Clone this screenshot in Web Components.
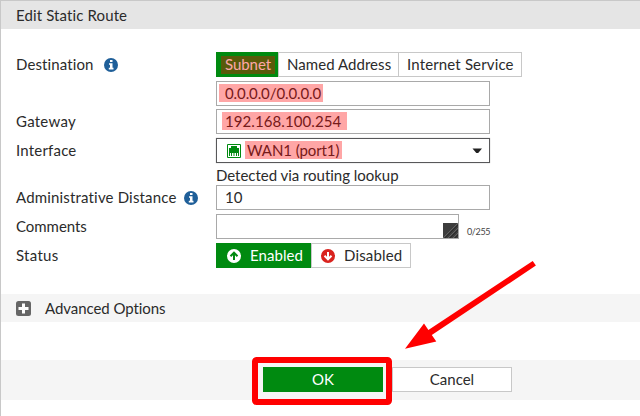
<!DOCTYPE html>
<html lang="en">
<head>
<meta charset="utf-8">
<title>Edit Static Route</title>
<style>
  html, body { margin: 0; height: 100%; background: #fff; overflow: hidden; }
  body { font: 15px/25px Lato, "Liberation Sans", sans-serif; color: #2b2b2b; }
</style>
</head>
<body>
<route-page></route-page>
<script>
const define = (name, html) => {
  const template = document.createElement('template');
  template.innerHTML = html;
  customElements.define(name, class extends HTMLElement {
    constructor() {
      super();
      this.attachShadow({ mode: 'open' }).append(template.content.cloneNode(true));
    }
  });
};

define('info-icon', `
<style>:host{display:inline-flex;width:14px;height:14px} svg{display:block}</style>
<svg width="14" height="14" viewBox="0 0 14 14"><circle cx="7" cy="7" r="7" fill="#1f5f99"/><path fill="#fff" d="M6 2h2.5v2H6zM5 5.2h3.5v4.6h1V11.6H4.8V9.8H6V6.8H5z"/></svg>`);

define('text-mark', `
<style>:host{position:relative;display:inline-block}
i{position:absolute;left:var(--l,-4px);width:var(--w,60px);top:var(--t,3px);height:18px;background:rgba(255,0,0,.35)}</style>
<slot></slot><i></i>`);

define('form-row', `
<style>:host{display:flex;height:25px;margin-bottom:var(--gap,4px)}
.label{width:200px;display:flex;align-items:center;flex:none;gap:7px;white-space:nowrap}
.control{display:flex;flex:none}</style>
<div class="label"><slot name="label"></slot></div><div class="control"><slot></slot></div>`);

define('field-box', `
<style>:host{box-sizing:border-box;display:flex;align-items:center;width:274px;height:25px;border:1px solid #a9a9a9;background:#fff;padding:0 8px;white-space:nowrap}
:host([select]){border-color:#58585a;padding:0 7px 0 10px;box-shadow:0 0 1px #aaa}</style>
<slot></slot>`);

define('toggle-option', `
<style>:host{box-sizing:border-box;display:flex;align-items:center;height:25px;border:1px solid #c8c8c8;background:#fff;white-space:nowrap;padding:0 0 0 8px}
:host([active]){background:#008a10;border-color:#008a10;color:#fff}
:host([joined]){border-left:0}
::slotted(svg){margin-right:9px;flex:none}</style>
<slot></slot>`);

define('push-button', `
<style>:host{box-sizing:border-box;width:120px;height:25px;border:1px solid #c8c8c8;background:#fff;display:flex;align-items:center;justify-content:center}
:host([primary]){background:#008a10;border-color:#008a10;color:#fff}</style>
<slot></slot>`);

define('size-grip', `
<style>:host{display:block;width:15px;height:15px} svg{display:block}</style>
<svg width="15" height="15"><rect width="15" height="15" fill="#3d3d3d"/><path d="M0 15 15 0M5 15 15 5M10 15 15 10" stroke="#626262" stroke-width="1"/><path d="M2 15 15 2M7 15 15 7M12 15l3-3" stroke="#2a2a2a" stroke-width="1"/></svg>`);

define('panel-header', `
<style>:host{box-sizing:border-box;display:flex;align-items:center;height:28px;padding:1px 15px 0;background:#e5e5e5;letter-spacing:.12px}</style>
<slot></slot>`);

define('advanced-bar', `
<style>:host{display:flex;align-items:center;height:28px;background:#f5f5f5;padding-left:15px;margin-top:26px;letter-spacing:-.06px}
svg{margin-right:14px}</style>
<svg width="15" height="15"><rect width="15" height="15" rx="2.5" fill="#666"/><path d="M6 2.5h3V6h3.5v3H9v3.5H6V9H2.5V6H6z" fill="#fff"/></svg><slot></slot>`);

define('action-bar', `
<style>:host{box-sizing:border-box;display:flex;gap:9px;height:40px;margin-top:38px;padding:7px 0 0 262px;background:#f5f5f5}</style>
<slot></slot>`);

define('callout-overlay', `
<style>:host{position:absolute;left:-1px;top:-1px;width:640px;height:416px;pointer-events:none} svg{display:block}</style>
<svg width="640" height="416"><rect x="255" y="360" width="134" height="42" rx="1.5" fill="none" stroke="#f00" stroke-width="6"/><path d="M532.7 261 535.9 265.5 431.8 335 436.3 341.5 405 348.8 424 323.4 428.4 330z" fill="#f00"/></svg>`);

define('route-page', `
<style>
:host{box-sizing:border-box;display:block;position:relative;width:640px;height:416px;border:1px solid #c8c8c8;border-right:0;border-bottom:0}
.form{padding:23px 0 0 15px}
.note{height:22px;margin-left:200px;line-height:25px;letter-spacing:-.03px}
.arrow{margin-left:auto}
.port{margin-right:6px;flex:none}
.comments{width:243px;padding:0;align-items:flex-end;justify-content:flex-end}
.count{font-size:9px;line-height:12px;margin:12px 0 0 8px;letter-spacing:-.35px;color:#444}
</style>
<panel-header>Edit Static Route</panel-header>
<div class="form">
  <form-row><span slot="label" style="letter-spacing:.12px;width:81px">Destination</span><info-icon slot="label"></info-icon>
    <toggle-option active style="width:62px"><text-mark style="--t:4px;--w:54px;letter-spacing:-.05px">Subnet</text-mark></toggle-option><toggle-option style="width:121px;letter-spacing:.05px">Named Address</toggle-option><toggle-option joined style="width:123px;letter-spacing:.15px">Internet Service</toggle-option>
  </form-row>
  <form-row style="--gap:3px"><field-box><text-mark style="--l:-6px;--w:104px;letter-spacing:-.1px">0.0.0.0/0.0.0.0</text-mark></field-box></form-row>
  <form-row><span slot="label" style="letter-spacing:.25px">Gateway</span><field-box><text-mark style="--l:-3px;--w:125px;letter-spacing:.08px">192.168.100.254</text-mark></field-box></form-row>
  <form-row style="--gap:0px"><span slot="label" style="letter-spacing:.2px">Interface</span>
    <field-box select><svg class="port" width="14" height="14"><path d="M.5.5h13v13H.5z" fill="#fff" stroke="#008a10"/><path d="M2 12V4h2V2h6v2h2v8h-1V9h-1v3H9V9H8v3H7.5V9h-1v3H6V9H5v3H4V9H3v3z" fill="#008a10"/></svg><text-mark style="--l:-2px;--w:97px;letter-spacing:-.08px">WAN1 (port1)</text-mark><svg class="arrow" width="10" height="6"><path d="M.5.5h9.5L6.2 5H4.3z" fill="#222"/></svg></field-box>
  </form-row>
  <div class="note">Detected via routing lookup</div>
  <form-row><span slot="label" style="letter-spacing:.17px;width:161px">Administrative Distance</span><info-icon slot="label"></info-icon><field-box>10</field-box></form-row>
  <form-row><span slot="label" style="letter-spacing:-.04px">Comments</span><field-box class="comments"><size-grip></size-grip></field-box><span class="count">0/255</span></form-row>
  <form-row><span slot="label" style="letter-spacing:.3px">Status</span>
    <toggle-option active style="padding-left:10px;width:95px;letter-spacing:.05px"><svg width="14" height="14"><circle cx="7" cy="7" r="7" fill="#fff"/><path d="M7 11V4M3.5 7.2 7 3.7l3.5 3.5" fill="none" stroke="#008a10" stroke-width="2"/></svg>Enabled</toggle-option><toggle-option style="padding-left:9px;width:100px;letter-spacing:.15px"><svg width="14" height="14"><circle cx="7" cy="7" r="7" fill="#d9231e"/><path d="M7 3v7M3.5 6.8 7 10.3l3.5-3.5" fill="none" stroke="#fff" stroke-width="2"/></svg>Disabled</toggle-option>
  </form-row>
</div>
<advanced-bar>Advanced Options</advanced-bar>
<action-bar><push-button primary>OK</push-button><push-button>Cancel</push-button></action-bar>
<callout-overlay></callout-overlay>`);
</script>
</body>
</html>
